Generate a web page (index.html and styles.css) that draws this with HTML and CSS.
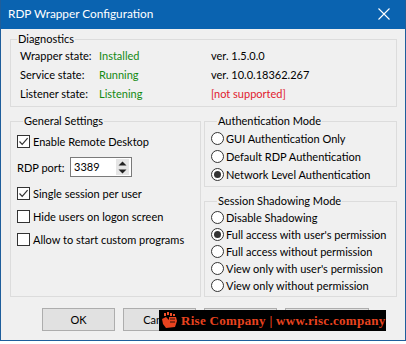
FILE: index.html
```html
<!DOCTYPE html>
<html>
<head>
<meta charset="utf-8">
<link rel="stylesheet" href="styles.css">
</head>
<body>
<div class="window">
  <div class="titlebar">
    <span class="title">RDP Wrapper Configuration</span>
    <svg class="close" width="12" height="12" viewBox="0 0 12 12"><path d="M0.5 0.5 L11.5 11.5 M11.5 0.5 L0.5 11.5" stroke="#fff" stroke-width="1.1" fill="none"/></svg>
  </div>
  <div class="content">
    <fieldset class="group diag">
      <legend>Diagnostics</legend>
      <div class="diag-grid">
        <span>Wrapper state:</span><span class="ok">Installed</span><span>ver. 1.5.0.0</span>
        <span>Service state:</span><span class="ok">Running</span><span>ver. 10.0.18362.267</span>
        <span>Listener state:</span><span class="ok">Listening</span><span class="bad">[not supported]</span>
      </div>
    </fieldset>

    <div class="middle">
      <fieldset class="group general">
        <legend>General Settings</legend>
        <label class="check r1"><span class="box on"><svg width="11" height="11" viewBox="0 0 11 11"><path d="M1.5 5.5 L4.2 8.3 L9.6 2.2" stroke="#333" stroke-width="1.2" fill="none"/></svg></span>Enable Remote Desktop</label>
        <div class="port">
          <span>RDP port:</span>
          <div class="spin"><span class="val">3389</span>
            <div class="arrows">
              <span class="arr"><svg width="9" height="5" viewBox="0 0 9 5"><path d="M0.5 4.5 L4.5 0.5 L8.5 4.5 Z" fill="#222"/></svg></span>
              <span class="arr"><svg width="9" height="5" viewBox="0 0 9 5"><path d="M0.5 0.5 L4.5 4.5 L8.5 0.5 Z" fill="#222"/></svg></span>
            </div>
          </div>
        </div>
        <label class="check r3"><span class="box on"><svg width="11" height="11" viewBox="0 0 11 11"><path d="M1.5 5.5 L4.2 8.3 L9.6 2.2" stroke="#333" stroke-width="1.2" fill="none"/></svg></span>Single session per user</label>
        <label class="check r4"><span class="box"></span>Hide users on logon screen</label>
        <label class="check r4"><span class="box"></span>Allow to start custom programs</label>
      </fieldset>

      <div class="right">
        <fieldset class="group auth">
          <legend>Authentication Mode</legend>
          <div class="radios">
            <label class="radio"><span class="circle"></span>GUI Authentication Only</label>
            <label class="radio"><span class="circle"></span>Default RDP Authentication</label>
            <label class="radio"><span class="circle on"></span>Network Level Authentication</label>
          </div>
        </fieldset>
        <fieldset class="group shadow">
          <legend>Session Shadowing Mode</legend>
          <div class="radios">
            <label class="radio"><span class="circle"></span>Disable Shadowing</label>
            <label class="radio"><span class="circle on"></span>Full access with user's permission</label>
            <label class="radio"><span class="circle"></span>Full access without permission</label>
            <label class="radio"><span class="circle"></span>View only with user's permission</label>
            <label class="radio"><span class="circle"></span>View only without permission</label>
          </div>
        </fieldset>
      </div>
    </div>

    <div class="buttons">
      <button class="btn">OK</button>
      <button class="btn">Cancel</button>
      <button class="btn">Apply</button>
      <button class="btn wide">License</button>
    </div>
  </div>

  <div class="watermark">
    <svg class="wm-icon" width="17" height="17" viewBox="0 0 17 17">
      <rect x="3" y="1" width="2" height="3" fill="#f0502a"/>
      <rect x="6" y="0" width="2" height="3" fill="#f0502a"/>
      <rect x="9" y="1" width="2" height="3" fill="#f0502a"/>
      <rect x="12" y="2" width="2" height="2" fill="#f0502a"/>
      <path d="M1 7 L5 5 L8 8 L8 5 L15 5 L16 9 L14 15 L5 16 L2 12 Z" fill="#e8431f"/>
      <path d="M9 7 L14 7" stroke="#000" stroke-width="0.8"/>
      <path d="M9 10 L14 10" stroke="#000" stroke-width="0.8"/>
    </svg>
    <span class="wm-text">Rise Company | www.risc.company</span>
  </div>
</div>
</body>
</html>
```
FILE: styles.css
```css
* { box-sizing: border-box; }
html, body { margin: 0; padding: 0; background: #ffffff; }
body {
  font-family: Lato, "Noto Sans", sans-serif;
  font-size: 11px;
  color: #000;
  white-space: nowrap;
}
.window {
  position: relative;
  width: 406px;
  height: 341px;
  border: 1px solid #1e5e9c;
  border-top: none;
  background: #f0f0f0;
  overflow: hidden;
}
.titlebar {
  height: 29px;
  margin: 0 -1px;
  background: #0a63b0;
  color: #fff;
  display: flex;
  align-items: center;
  justify-content: space-between;
  padding: 0 16px 2px 8px;
}
.title { font-size: 11.8px; line-height: 16px; }
.close { display: block; margin-top: 1px; }
.content {
  padding: 0 8px 0 9px;
}
.group {
  margin: 0;
  padding: 0;
  border: 1px solid #dcdcdc;
  min-width: 0;
}
.group legend {
  margin-left: 6px;
  padding: 0 1px;
  line-height: 14px;
  height: 14px;
}
.diag { margin-top: 3px; padding-bottom: 3px; }
.diag-grid {
  display: grid;
  grid-template-columns: 79px 112px 1fr;
  padding-left: 9px;
  line-height: 19px;
}
.ok { color: #138a13; }
.bad { color: #e0202e; }
.middle {
  display: flex;
  gap: 3px;
  margin-top: 7px;
  height: 183px;
}
.general { width: 191px; flex: none; padding-left: 6px; }
.right { flex: 1; display: flex; flex-direction: column; min-width: 0; }
.check {
  display: flex;
  align-items: center;
  height: 17px;
  line-height: 17px;
}
.r1 { margin-top: 5px; }
.r3 { margin-top: 8px; }
.r4 { margin-top: 6px; }
.box {
  width: 13px;
  height: 13px;
  border: 1px solid #333;
  background: #fff;
  margin-right: 3px;
  display: flex;
  align-items: center;
  justify-content: center;
  flex: none;
}
.box svg { display: block; }
.port {
  display: flex;
  align-items: center;
  margin-top: 7px;
  height: 20px;
}
.port > span { width: 53px; flex: none; }
.spin {
  width: 62px;
  height: 20px;
  flex: none;
  border: 1px solid #7a7a7a;
  background: #fff;
  display: flex;
  align-items: center;
  justify-content: space-between;
  padding: 0 2px 0 3px;
}
.val { line-height: 18px; }
.arrows { display: flex; flex-direction: column; }
.arr {
  width: 13px;
  height: 8px;
  background: #e6e6e6;
  display: flex;
  align-items: center;
  justify-content: center;
}
.arr svg { display: block; }
.auth { height: 73px; flex: none; padding-left: 6px; }
.shadow { margin-top: 7px; flex: 1; padding-left: 6px; }
.auth .radios { margin-top: 1px; }
.auth .radio { height: 18px; }
.shadow .radios { margin-top: 1px; }
.shadow .radio { height: 17px; }
.radio {
  display: flex;
  align-items: center;
}
.circle {
  width: 13px;
  height: 13px;
  border: 1px solid #333;
  border-radius: 50%;
  background: #fff;
  margin-right: 2px;
  flex: none;
  display: flex;
  align-items: center;
  justify-content: center;
}
.circle.on::after {
  content: "";
  width: 7px;
  height: 7px;
  border-radius: 50%;
  background: #333;
}
.buttons {
  display: flex;
  gap: 8px;
  margin-top: 11px;
  padding-left: 32px;
}
.btn {
  width: 73px;
  height: 23px;
  flex: none;
  background: #e1e1e1;
  border: 1px solid #adadad;
  font-family: inherit;
  font-size: 11px;
  color: #000;
  padding: 0;
}
.btn.wide { width: 84px; }
.watermark {
  position: absolute;
  left: 158px;
  top: 310px;
  width: 227px;
  height: 21px;
  background: #000;
  display: flex;
  align-items: center;
  padding-left: 2px;
}
.wm-icon { display: block; margin-right: 3px; flex: none; }
.wm-text {
  font-family: "Liberation Serif", "DejaVu Serif", serif;
  font-size: 13px;
  font-weight: bold;
  letter-spacing: 0.3px;
  color: #e8431f;
}
```
